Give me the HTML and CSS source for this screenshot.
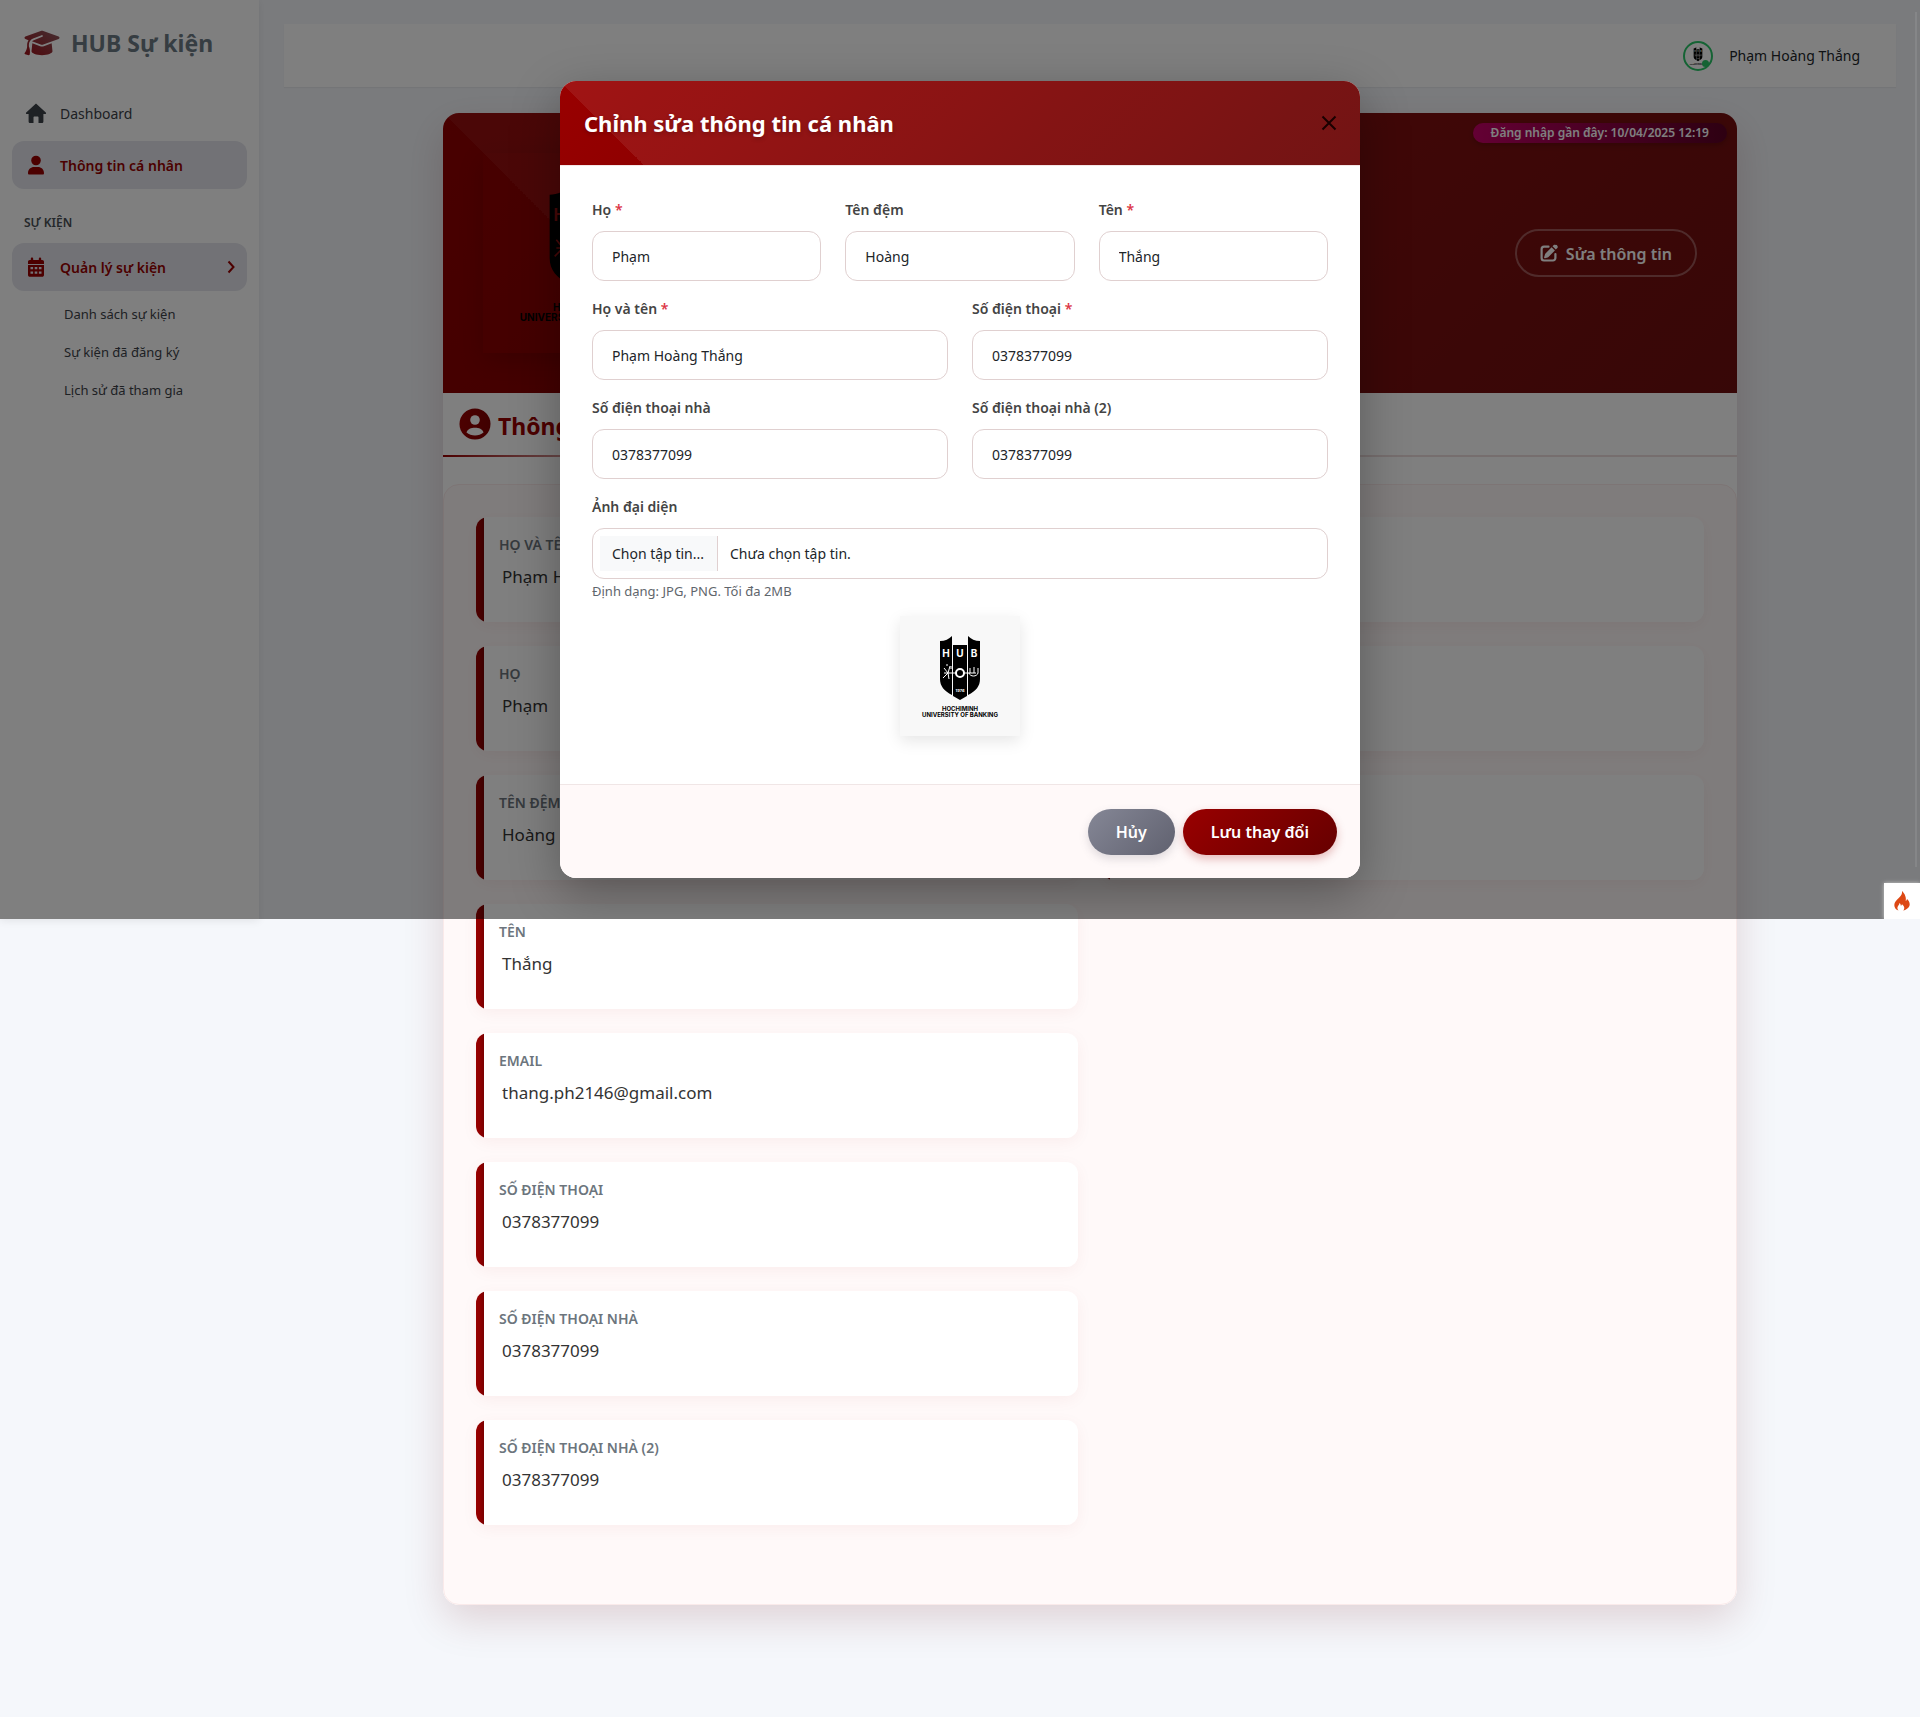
FILE: index.html
```html
<!DOCTYPE html>
<html lang="vi">
<head>
<meta charset="utf-8">
<title>HUB Sự kiện - Thông tin cá nhân</title>
<link rel="stylesheet" href="styles.css">
</head>
<body>
<svg class="defs" aria-hidden="true">
  <defs>
    <linearGradient id="brand" x1="0" y1="0" x2="1" y2="0">
      <stop offset="0" stop-color="#990000"/><stop offset="1" stop-color="#800000"/>
    </linearGradient>
    <linearGradient id="cap" x1="0" y1="1" x2="1" y2="0">
      <stop offset="0" stop-color="#a01018"/><stop offset="1" stop-color="#8a5a60"/>
    </linearGradient>
    <g id="shield">
      <path d="M40 25c5 0 9-2 12-5v59c-8-4-12-9-12-16z"/>
      <path d="M53 29h14v51l-7 4-7-4z"/>
      <path d="M80 25c-5 0-9-2-12-5v59c8-4 12-9 12-16z"/>
    </g>
    <g id="crest">
      <use href="#shield"/>
      <g class="crest-ink">
        <text x="46" y="41" font-size="10">H</text>
        <text x="60" y="41" font-size="10">U</text>
        <text x="74" y="41" font-size="10">B</text>
        <text x="60" y="76" font-size="4">1976</text>
      </g>
      <g class="crest-line">
        <path d="M44 57h12M64 57h12M48 57l-4-5M48 57l-5 5M48 57l2-7M48 57l1 6M47 50v-2M51 53v-3"/>
        <circle cx="60" cy="57" r="4" stroke-width="2"/>
        <path d="M70 57v-5M74 57v-6M78 57v-5M69 57c1 4 8 4 9 0"/>
      </g>
      <text x="60" y="95" font-size="6">HOCHIMINH</text>
      <text x="60" y="101" font-size="6">UNIVERSITY OF BANKING</text>
    </g>
  </defs>
</svg>

<div class="app">
  <aside class="sidebar">
    <a class="brand" href="#">
      <svg width="36" height="28" viewBox="0 0 640 512" fill="url(#cap)"><path d="M320 32c-8.100 0-16.100 1.400-23.700 4.100L15.800 137.400C6.300 140.900 0 149.900 0 160s6.300 19.100 15.800 22.600l57.900 20.900C57.300 229.300 48 259.800 48 291.900V320c0 28.400-10.800 57.700-22.300 80.800-6.500 13-13.900 25.800-22.500 37.600-3.200 4.300-4.100 9.900-2.300 15s6 8.900 11.200 10.200l64 16c4.200 1.100 8.700.3 12.400-2s6.300-6.100 7.100-10.400c8.600-42.800 4.300-81.200-2.100-108.700-3.200-14.200-7.500-28.700-13.500-42v-24.600c0-30.200 10.200-58.700 27.900-81.500 12.900-15.500 29.600-28 49.200-35.700l157-61.700c8.200-3.200 17.500.8 20.700 9s-.8 17.500-9 20.700l-157 61.700c-12.400 4.900-23.300 12.400-32.200 21.600l159.600 57.600c7.600 2.700 15.600 4.100 23.700 4.100s16.100-1.400 23.700-4.100l280.600-101.200c9.500-3.400 15.800-12.500 15.800-22.600s-6.300-19.100-15.800-22.600L343.700 36.100C336.100 33.400 328.100 32 320 32zM128 408c0 35.300 86 72 192 72s192-36.700 192-72l-15.300-145.400L354.500 314c-11.100 4-22.800 6-34.500 6s-23.500-2-34.500-6l-142.200-51.400z"/></svg>
      <span>HUB Sự kiện</span>
    </a>
    <nav class="menu">
      <a class="menu-item" href="#">
        <svg width="24" height="24" viewBox="0 0 24 24"><path d="M12 2.600 2.200 11.400c-.6.600-.2 1.600.6 1.600H4.600v7.400c0 .9.700 1.600 1.600 1.600h3.300v-5.400c0-.6.400-1 1-1h3c.6 0 1 .4 1 1V22h3.300c.9 0 1.600-.7 1.600-1.600V13h1.800c.8 0 1.200-1 .6-1.600z"/></svg>
        <span>Dashboard</span>
      </a>
      <a class="menu-item active" href="#">
        <svg width="24" height="24" viewBox="0 0 24 24"><circle cx="12" cy="7.500" r="4.800"/><path d="M4 20.200C4 16.200 7 14 10 14h4c3 0 6 2.200 6 6.200 0 .7-.5 1.300-1.200 1.300H5.200c-.7 0-1.200-.6-1.200-1.300z"/></svg>
        <span>Thông tin cá nhân</span>
      </a>
      <h2 class="menu-heading">SỰ KIỆN</h2>
      <a class="menu-item active" href="#">
        <svg width="24" height="24" viewBox="0 0 24 24"><path fill-rule="evenodd" d="M8 2.500c.7 0 1.200.5 1.200 1.200V5h5.600V3.700a1.200 1.200 0 0 1 2.400 0V5h1c1 0 1.800.8 1.800 1.800V9H4V6.800C4 5.800 4.800 5 5.800 5h1V3.700C6.800 3 7.300 2.500 8 2.500zM4 10h16v10c0 1-.8 1.800-1.800 1.800H5.800C4.800 21.800 4 21 4 20zm2.500 2v2.200h2.600V12zm4.200 0v2.200h2.600V12zm4.200 0v2.200h2.600V12zm-8.400 4.500v2.300h2.600v-2.300zm4.200 0v2.300h2.600v-2.300zm4.200 0v2.300h2.600v-2.300z"/></svg>
        <span>Quản lý sự kiện</span>
        <svg class="chevron" width="8" height="14" viewBox="0 0 8 14"><path d="M1.500 1.500 6.500 7l-5 5.500"/></svg>
      </a>
      <a class="submenu-item" href="#">Danh sách sự kiện</a>
      <a class="submenu-item" href="#">Sự kiện đã đăng ký</a>
      <a class="submenu-item" href="#">Lịch sử đã tham gia</a>
    </nav>
  </aside>

  <main class="content">
    <header class="topbar">
      <span class="avatar">
        <svg width="26" height="26" viewBox="0 0 120 120"><use href="#crest"/></svg>
      </span>
      <span>Phạm Hoàng Thắng</span>
    </header>

    <section class="profile">
      <div class="profile-header">
        <span class="last-login">Đăng nhập gần đây: 10/04/2025 12:19</span>
        <div class="profile-photo">
          <svg class="photo-crest" width="200" height="200" viewBox="0 0 120 120"><use href="#crest"/></svg>
        </div>
        <button class="edit-button" type="button">
          <svg width="18" height="18" viewBox="0 0 18 18"><path d="M15.300.9a2 2 0 0 1 1.800 3.400l-1.300 1.300-3.300-3.300L13.800 1c.4-.3.900-.3 1.500-.1zM11.600 3.200l3.300 3.300-6.200 6.200c-.4.300-.7.500-1.100.7l-2.500.8c-.7.200-1.200-.3-1-1l.8-2.500c.1-.4.300-.8.600-1.100z"/><path d="M8.500 2.700H4A2.400 2.400 0 0 0 1.600 5.100v9A2.400 2.400 0 0 0 4 16.500h9a2.400 2.400 0 0 0 2.400-2.400V10" fill="none" stroke="currentColor" stroke-width="2.200" stroke-linecap="round"/></svg>
          <span>Sửa thông tin</span>
        </button>
      </div>
      <h1 class="profile-title">
        <svg width="32" height="32" viewBox="0 0 32 32"><circle cx="16" cy="16" r="15.500" fill="url(#brand)"/><circle cx="16" cy="12" r="4.800"/><path d="M7.500 24.500c1-3.600 4.700-4.700 8.500-4.700s7.500 1.100 8.500 4.700c-4.500 4-12.500 4-17 0z"/></svg>
        <span>Thông tin cá nhân</span>
      </h1>
      <div class="info-panel">
        <dl class="info-column">
          <div class="info-item"><dt>HỌ VÀ TÊN</dt><dd>Phạm Hoàng Thắng</dd></div>
          <div class="info-item"><dt>HỌ</dt><dd>Phạm</dd></div>
          <div class="info-item"><dt>TÊN ĐỆM</dt><dd>Hoàng</dd></div>
          <div class="info-item"><dt>TÊN</dt><dd>Thắng</dd></div>
          <div class="info-item"><dt>EMAIL</dt><dd>thang.ph2146@gmail.com</dd></div>
          <div class="info-item"><dt>SỐ ĐIỆN THOẠI</dt><dd>0378377099</dd></div>
          <div class="info-item"><dt>SỐ ĐIỆN THOẠI NHÀ</dt><dd>0378377099</dd></div>
          <div class="info-item"><dt>SỐ ĐIỆN THOẠI NHÀ (2)</dt><dd>0378377099</dd></div>
        </dl>
        <div class="info-column">
          <div class="info-item"></div>
          <div class="info-item"></div>
          <div class="info-item"></div>
        </div>
      </div>
    </section>
  </main>
</div>

<div class="backdrop">
  <div class="scroll-track"></div>
  <form class="modal" role="dialog" aria-labelledby="modal-title">
    <header class="modal-header">
      <h2 id="modal-title">Chỉnh sửa thông tin cá nhân</h2>
      <button class="close" type="button" aria-label="Đóng">
        <svg width="16" height="16" viewBox="0 0 16 16"><path d="M1.500 1.500l13 13M14.500 1.500l-13 13"/></svg>
      </button>
    </header>
    <div class="modal-body">
      <div class="row">
        <div class="field"><label for="ho">Họ <b>*</b></label><input id="ho" type="text" value="Phạm"></div>
        <div class="field"><label for="dem">Tên đệm</label><input id="dem" type="text" value="Hoàng"></div>
        <div class="field"><label for="ten">Tên <b>*</b></label><input id="ten" type="text" value="Thắng"></div>
      </div>
      <div class="row">
        <div class="field"><label for="hoten">Họ và tên <b>*</b></label><input id="hoten" type="text" value="Phạm Hoàng Thắng"></div>
        <div class="field"><label for="sdt">Số điện thoại <b>*</b></label><input id="sdt" type="tel" value="0378377099"></div>
      </div>
      <div class="row">
        <div class="field"><label for="nha">Số điện thoại nhà</label><input id="nha" type="tel" value="0378377099"></div>
        <div class="field"><label for="nha2">Số điện thoại nhà (2)</label><input id="nha2" type="tel" value="0378377099"></div>
      </div>
      <div class="field">
        <label for="anh">Ảnh đại diện</label>
        <div class="file">
          <span class="file-button">Chọn tập tin...</span>
          <span class="file-name">Chưa chọn tập tin.</span>
          <input id="anh" type="file" accept="image/png,image/jpeg">
        </div>
        <p class="hint">Định dạng: JPG, PNG. Tối đa 2MB</p>
      </div>
      <div class="preview">
        <svg width="120" height="120" viewBox="0 0 120 120"><use href="#crest"/></svg>
      </div>
    </div>
    <footer class="modal-footer">
      <button class="pill cancel" type="button">Hủy</button>
      <button class="pill save" type="submit">Lưu thay đổi</button>
    </footer>
  </form>
  <button class="debug" type="button" aria-label="Debug toolbar">
    <svg width="16" height="20" viewBox="0 0 16 20"><path d="M8 0c.5 3-1 4.500-3 6.800C2.500 9.300.3 11.500.3 14c0 2.600 1.500 4.700 4.200 5.600-1.200-1.300-1.400-3-.6-4.300.6-1.100 1.600-1.700 1.500-3.300 1 .6 1.500 1.600 1.400 2.700.7-.2 1-.8 1.100-1.500 2 1.300 3.500 3.800 1.300 6.400 3.300-.8 6.500-3 6.500-6.300 0-2.400-1.300-3.900-2.700-5.300-.1 1-.5 1.700-1.300 2.100C12.500 6.500 10.800 2.500 8 0z"/></svg>
  </button>
</div>
</body>
</html>
```
FILE: styles.css
```css
:root {
  --screen: 919px;
  --red: #990000;
  --dark-red: #660000;
}

* { box-sizing: border-box; }

body {
  margin: 0;
  background: #f5f7fb;
  color: #212529;
  font: 14px/24px "Noto Sans", "Open Sans", sans-serif;
}

h1, h2, p, dl, dd { margin: 0; }
a { color: inherit; text-decoration: none; }
button, input { font: inherit; }
svg { flex: none; }

.defs { position: absolute; width: 0; height: 0; }
.app { display: flex; align-items: flex-start; }

/* Sidebar */
.sidebar {
  width: 259px;
  flex: none;
  height: var(--screen);
  padding: 19px 12px;
  background: #fff;
  box-shadow: 0 2px 8px rgba(0, 0, 0, 0.08);
}
.brand {
  display: flex;
  align-items: center;
  gap: 11px;
  height: 48px;
  padding: 0 12px;
  color: #6c7a84;
  font-size: 23px;
  font-weight: 700;
}
.menu { display: flex; flex-direction: column; padding-top: 22px; }
.menu-item {
  display: flex;
  align-items: center;
  gap: 12px;
  height: 48px;
  margin-bottom: 4px;
  padding: 0 12px;
  border-radius: 12px;
  color: #3c4248;
}
.menu-item span { padding-top: 2px; }
.menu-item svg { fill: currentColor; }
.menu-item.active { background: #e4e5ec; color: var(--red); font-weight: 600; }
.menu-item .chevron {
  margin-left: auto;
  fill: none;
  stroke: currentColor;
  stroke-width: 2;
}
.menu-heading {
  padding: 18px 12px 8px;
  color: #4a5056;
  font-size: 12px;
  font-weight: 600;
}
.submenu-item {
  padding: 7px 12px 7px 52px;
  color: #3c4248;
  font-size: 13px;
}

/* Page */
.content { flex: 1; min-width: 0; padding: 24px 24px 113px 25px; }
.topbar {
  display: flex;
  align-items: center;
  justify-content: flex-end;
  gap: 16px;
  height: 63px;
  padding: 0 36px;
  background: #fff;
  box-shadow: 0 1px 1px rgba(0, 0, 0, 0.05);
}
.avatar {
  position: relative;
  display: flex;
  border: 2px solid #2ac769;
  border-radius: 50%;
}
.avatar::after {
  content: "";
  position: absolute;
  right: 2px;
  bottom: 2px;
  width: 7px;
  height: 7px;
  border-radius: 50%;
  background: #2ac769;
}
.profile {
  max-width: 1294px;
  margin: 26px auto 0;
  border-radius: 16px;
  background: #fff;
  box-shadow: 0 15px 40px rgba(102, 0, 0, 0.15);
}
.profile-header {
  position: relative;
  display: flex;
  align-items: center;
  justify-content: space-between;
  padding: 40px;
  border-radius: 16px 16px 0 0;
  background:
    linear-gradient(to top right, transparent 50%, rgba(255, 255, 255, 0.06) 50%) 0 0 / 280px 280px no-repeat,
    linear-gradient(to right, transparent 280px, rgba(255, 255, 255, 0.06) 280px),
    linear-gradient(135deg, #920000, var(--dark-red));
}
.last-login {
  position: absolute;
  top: 10px;
  right: 10px;
  padding: 0 18px;
  border-radius: 10px;
  background: linear-gradient(90deg, #c80068, #5c0024);
  box-shadow: 0 2px 6px rgba(0, 0, 0, 0.2);
  color: #fff;
  font-size: 12px;
  font-weight: 600;
  line-height: 20px;
}
.profile-photo {
  display: flex;
  box-shadow: 0 8px 24px rgba(0, 0, 0, 0.15);
}
.photo-crest { --ink: #8c0f0f; }
.edit-button {
  display: flex;
  align-items: center;
  gap: 8px;
  height: 48px;
  padding: 0 23px;
  border: 2px solid rgba(255, 255, 255, 0.3);
  border-radius: 24px;
  background: none;
  color: #fff;
  font-size: 16px;
  font-weight: 600;
}
.edit-button svg { fill: currentColor; }
.edit-button span { padding-top: 2px; }
.profile-title {
  display: flex;
  align-items: center;
  gap: 7px;
  height: 64px;
  padding: 0 16px;
  border-bottom: 2px solid;
  border-image: linear-gradient(90deg, var(--red), #ecdcdc 14%) 1;
  color: var(--red);
  font-size: 23px;
}
.profile-title svg { fill: #fff; }
.profile-title span { padding-top: 3px; }
.info-panel {
  display: grid;
  grid-template-columns: 1fr 1fr;
  gap: 24px;
  margin-top: 27px;
  padding: 32px 32px 79px;
  border: 1px solid #faeaea;
  border-radius: 16px;
  background: #fff9f9;
}
.info-column { display: flex; flex-direction: column; gap: 24px; }
.info-item {
  min-height: 105px;
  padding: 16px 23px;
  border-radius: 12px;
  background: linear-gradient(90deg, var(--red), #900000 4px, #7a0000 8px, #fff 8px);
  box-shadow: 0 4px 16px rgba(153, 0, 0, 0.05);
}
.info-item dt { color: #6c757d; font-weight: 600; }
.info-item dd { padding: 8px 3px; color: #333; font-size: 17px; }

/* Crest */
#crest text {
  font-family: Inter, "Liberation Sans", sans-serif;
  font-weight: 700;
  text-anchor: middle;
}
.crest-ink { fill: var(--ink, #fff); }
.crest-line { fill: none; stroke: var(--ink, #fff); stroke-width: 1; }

/* Modal */
.backdrop {
  position: absolute;
  top: 0;
  left: 0;
  right: 0;
  height: var(--screen);
  padding: 81px 16px 0;
  overflow: hidden;
  background: rgba(0, 0, 0, 0.5);
}
.scroll-track {
  position: absolute;
  top: 12px;
  right: 3px;
  bottom: 52px;
  width: 2px;
  background: #858688;
}
.modal {
  max-width: 800px;
  margin: 0 auto;
  border-radius: 16px;
  background: #fff;
  box-shadow: 0 15px 50px rgba(0, 0, 0, 0.3);
}
.modal-header {
  display: flex;
  align-items: center;
  justify-content: space-between;
  height: 85px;
  padding: 0 23px 0 24px;
  border-bottom: 1px solid #f3e6e6;
  border-radius: 16px 16px 0 0;
  background:
    linear-gradient(to top right, transparent 50%, rgba(255, 255, 255, 0.08) 50%) 0 0 / 84px 84px no-repeat,
    linear-gradient(to right, transparent 84px, rgba(255, 255, 255, 0.08) 84px),
    linear-gradient(135deg, var(--red), var(--dark-red));
  background-clip: padding-box;
  color: #fff;
}
.modal-header h2 {
  font-size: 22px;
  text-shadow: 0 2px 4px rgba(0, 0, 0, 0.2);
}
.close { display: flex; padding: 0; border: 0; background: none; }
.close svg { fill: none; stroke: #1a0000; stroke-width: 2; }
.modal-body {
  display: flex;
  flex-direction: column;
  gap: 16px;
  padding: 32px 32px 48px;
}
.row { display: flex; gap: 24px; }
.field { flex: 1; min-width: 0; }
.field label {
  display: block;
  margin-bottom: 9px;
  color: #444;
  font-weight: 600;
  line-height: 24px;
}
.field b { color: #dc3545; font-weight: 600; }
.field input[type="text"],
.field input[type="tel"],
.file {
  display: flex;
  width: 100%;
  height: 50px;
  padding: 0 19px;
  border: 1px solid #e0d0d0;
  border-radius: 12px;
  background: #fff;
  color: #212529;
}
.field .file {
  position: relative;
  align-items: center;
  gap: 12px;
  height: 51px;
  padding: 0 7px;
}
.file-button {
  padding: 6px 13px 5px 12px;
  border-right: 1px solid #e0d0d0;
  background: #f8f9fa;
}
.file-name { padding-top: 1px; }
.file input {
  position: absolute;
  inset: 0;
  width: 100%;
  opacity: 0;
}
.hint { color: #5f666c; font-size: 13px; }
.preview {
  display: flex;
  align-self: center;
  margin-top: -3px;
  background: #f8f8f8;
  box-shadow: 0 5px 15px rgba(0, 0, 0, 0.1);
}
.modal-footer {
  display: flex;
  justify-content: flex-end;
  gap: 8px;
  padding: 24px 23px 23px;
  border-top: 1px solid #f0e6e6;
  border-radius: 0 0 16px 16px;
  background: #fff9f9;
}
.pill {
  height: 46px;
  padding: 0 28px;
  border: 0;
  border-radius: 23px;
  color: #fff;
  font-size: 16px;
  font-weight: 600;
}
.cancel {
  background: linear-gradient(135deg, #858796, #60616f);
  box-shadow: 0 4px 10px rgba(96, 97, 111, 0.2);
}
.save {
  background: linear-gradient(135deg, var(--red), var(--dark-red));
  box-shadow: 0 4px 10px rgba(153, 0, 0, 0.25);
}
.debug {
  position: absolute;
  right: 0;
  bottom: 0;
  display: flex;
  align-items: center;
  justify-content: center;
  width: 36px;
  height: 36px;
  padding: 0;
  border: 0;
  background: #fff;
  box-shadow: 0 0 4px rgba(255, 255, 255, 0.6);
}
.debug svg { fill: #dd4814; }
```
